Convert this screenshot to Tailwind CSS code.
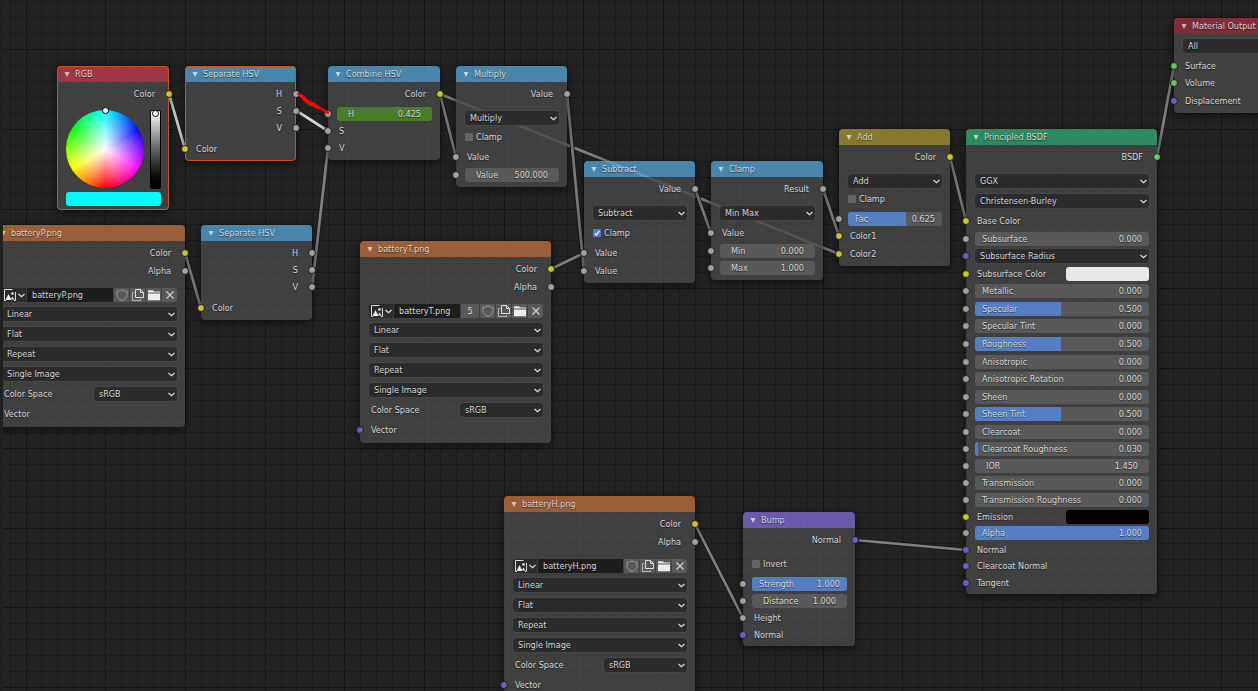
<!DOCTYPE html>
<html lang="en">
<head>
<meta charset="utf-8">
<title>Shader Editor</title>
<script src="https://cdn.jsdelivr.net/npm/@tailwindcss/browser@4"></script>
</head>
<body class="bg-[#232323]">
<main id="canvas" class="relative h-screen overflow-hidden bg-[#232323] text-[9px] leading-[14px] text-[#d8d8d8] font-['DejaVu_Sans_Condensed','DejaVu_Sans',sans-serif] [text-shadow:0_1px_1px_rgba(0,0,0,0.6)]">
  <svg id="wires" class="absolute inset-0 size-full" aria-hidden="true"></svg>
  <div id="nodes"></div>
  <svg class="pointer-events-none absolute inset-0 size-full" fill="none" stroke="#f00" stroke-width="2.2" stroke-linecap="round" stroke-linejoin="round" aria-hidden="true">
    <path d="M298 94L303 96L309 102L314 103.500L318 107L322 109L328 113M300 95L304 100L310 105L314 105L318 108M310 103L315 107"/>
  </svg>
  <div class="absolute inset-y-0 left-0 w-[3px] bg-[#202020]"></div>
</main>
<script>
const dots = {
  y: 'bg-[#c7c729]', g: 'bg-[#a1a1a1]', b: 'bg-[#6363c7]', s: 'bg-[#63c763]'
};
const heads = {
  red: 'bg-[#be3d4c]/80', out: 'bg-[#9b2d3b]/80', blue: 'bg-[#519fcf]/80', orange: 'bg-[#ba6d3b]/80',
  yellow: 'bg-[#a18e32]/80', green: 'bg-[#32a56e]/80', purple: 'bg-[#7d68cd]/80'
};
const heights = { 16: 'h-4', 17: 'h-[17px] pb-px', 18: 'h-[18px]', 20: 'h-5' };
const dotTops = { 16: 'top-1', 17: 'top-1', 18: 'top-[5px]', 20: 'top-1.5' };
const gaps = { 1: 'h-px', 2: 'h-0.5', 3: 'h-[3px]', 6: 'h-1.5', 7: 'h-[7px]' };
let uid = 0;

const dot = (c, side, h) => c ? `<i class="absolute ${dotTops[h]} ${side === 'r' ? '-right-1' : '-left-1'} size-2 rounded-full border border-[#1c1c1c] ${dots[c]}"></i>` : '';
const row = (h, inner, c, side = 'l') => `<div class="relative flex items-center pl-[9px] pr-2 ${heights[h]}">${dot(c, side, h)}${inner}</div>`;
const gap = n => `<div class="${gaps[n]}"></div>`;
const out = (text, c, h = 18) => row(h, `<span class="ml-auto pr-1.5">${text}</span>`, c, 'r');
const inp = (text, c, h = 18) => row(h, `<span class="pl-0.5 whitespace-nowrap">${text}</span>`, c);
const chevron = `<svg class="pointer-events-none absolute right-[2px] top-[5px] h-[5px] w-[7px]" viewBox="0 0 7 5" fill="none" stroke="#dedede" stroke-width="1.2"><path d="M.5 1L3.5 3.8L6.5 1"/></svg>`;
const select = (text, label) => `<span class="relative block h-[14px] min-w-0 flex-1"><select aria-label="${label || text}" class="block h-[14px] w-full appearance-none rounded-[3px] bg-[#2b2b2b] pl-[5px] pr-3 leading-[14px] outline outline-[#464646] [text-shadow:inherit]"><option>${text}</option></select>${chevron}</span>`;
const sel = (text, h = 18, c, label) => row(h, select(text, label), c);
const check = (text, on) => { const id = 'f' + uid++; return row(18, `<input id="${id}" type="checkbox" ${on ? 'checked' : ''} class="peer size-2 appearance-none rounded-[1px] bg-[#656565] checked:bg-[#4f7bc6]"><svg class="pointer-events-none absolute left-[9px] hidden size-2 peer-checked:block" viewBox="0 0 9 9" fill="none" stroke="#fff" stroke-width="1.4"><path d="M2 4.8L3.8 6.8L7.2 2.2"/></svg><label for="${id}" class="pl-[3px]">${text}</label>`); };
const field = (text, value, c, h, fill, style) => {
  const id = 'f' + uid++;
  return row(h, `<div class="relative flex h-[14px] w-full items-center overflow-hidden rounded-[3px] ${style === 'key' ? 'bg-[#477f29]' : 'bg-[#595959]'} ${style ? 'px-[11px]' : 'px-[7px]'}">
    ${fill ? `<i class="absolute inset-y-0 left-0 bg-[#557fc4]" style="width:${fill}%"></i>` : ''}
    <label for="${id}" class="relative whitespace-nowrap">${text}</label><input id="${id}" value="${value}" class="relative w-0 min-w-0 flex-1 bg-transparent text-right outline-none [text-shadow:inherit]"></div>`, c);
};
const swatch = (text, bg, c, h) => row(h, `<span class="w-1/2 grow pl-0.5 whitespace-nowrap">${text}</span><button aria-label="${text}" class="h-[14px] w-[83px] rounded-[3px] ${bg}"></button>`, c);

const icon = {
  image: `<svg class="size-3" viewBox="0 0 12 12" fill="none" stroke="#dcdcdc"><path d="M8.500 .5H.5V11.500H2M11.500 3V11.500H10"/><path d="M1.500 11L4.500 5L7.500 11ZM7 10L8.500 7.500L10.500 11Z" fill="#eee" stroke="none"/><circle cx="8.500" cy="4.500" r="1.300" fill="#eee" stroke="none"/></svg>`,
  chev: `<svg class="h-[5px] w-[7px]" viewBox="0 0 7 5" fill="none" stroke="#dedede" stroke-width="1.200"><path d="M.5 1L3.500 3.800L6.500 1"/></svg>`,
  shield: `<svg class="size-3" viewBox="0 0 12 12" fill="none" stroke="#9a9a9a"><path d="M6 .7C4.500 1.800 2.800 2.100 1 2.100V5.500C1 8.300 3 10.300 6 11.500C9 10.300 11 8.300 11 5.500V2.100C9.200 2.100 7.500 1.800 6 .7Z"/></svg>`,
  copy: `<svg class="size-3" viewBox="0 0 12 12" fill="none" stroke="#e0e0e0"><path d="M3.500 .5H8.500L11.500 3.500V8.500H3.500ZM8.500 .5V3.500H11.500"/><path d="M2 3.500H.5V11.500H8.500V10" stroke="#b5b5b5"/></svg>`,
  folder: `<svg class="size-3" viewBox="0 0 12 12" fill="#ececec"><path d="M0 1.200H5L6 2.500H12V3.600H0ZM0 4.500H12V11.200H0Z"/></svg>`,
  x: `<svg class="size-3" viewBox="0 0 12 12" fill="none" stroke="#d0d0d0" stroke-width="1.200"><path d="M2.500 2.500L9.500 9.500M9.500 2.500L2.500 9.500"/></svg>`
};
const ib = (name, label, round = '') => `<button aria-label="${label}" class="flex h-[14px] w-[15px] items-center justify-center bg-[#595959] ${round}">${icon[name]}</button>`;
const datablock = (name, users) => row(18, `<div class="flex w-full gap-px">
  <button aria-label="Browse image" class="flex h-[14px] w-6 items-center justify-end gap-0.5 rounded-l-[3px] bg-[#2b2b2b] pr-px">${icon.image}${icon.chev}</button>
  <input aria-label="Image name" value="${name}" class="h-[14px] w-0 min-w-0 flex-1 bg-[#1d1d1d] pl-[5px] outline-none [text-shadow:inherit]">
  ${users ? `<button aria-label="Users" class="h-[14px] w-[18px] bg-[#595959]">${users}</button>` : ''}
  ${ib('shield', 'Fake user')}${ib('copy', 'New image')}${ib('folder', 'Open image')}${ib('x', 'Unlink', 'rounded-r-[3px]')}</div>`);
const imageNode = (name, users) => out('Color', 'y') + out('Alpha', 'g') + gap(6) + datablock(name, users) +
  sel('Linear', 20) + sel('Flat', 20) + sel('Repeat', 20) + sel('Single Image', 20) +
  row(20, `<span class="w-0 flex-1 pl-0.5 whitespace-nowrap">Color Space</span><span class="flex w-[83px]">${select('sRGB', 'Color Space')}</span>`) + inp('Vector', 'b', 20);

const wheel = `<div class="flex justify-between pl-[9px] pr-2">
  <div class="relative size-[78px] rounded-full bg-[radial-gradient(circle_closest-side,#fff,transparent),conic-gradient(#0ff,#00f,#f0f,#f00,#ff0,#0f0,#0ff)]"><i class="absolute -top-[3px] left-9 size-[7px] rounded-full border border-black bg-white"></i></div>
  <div class="relative h-[79px] w-[11px] rounded-[2px] border border-black bg-linear-to-b from-white to-black"><i class="absolute -top-px left-px size-[7px] rounded-full border border-black bg-white"></i></div></div>
  ${gap(3)}<div class="flex pl-[9px] pr-2"><button aria-label="Color value" class="h-[14px] flex-1 rounded-[3px] bg-[#00fbff]"></button></div>${gap(1)}`;

const hsvOut = out('H', 'g') + out('S', 'g', 17) + out('V', 'g', 17) + gap(3) + inp('Color', 'y');
const nodes = [
  [57, 66, 112, 'red', 'RGB', out('Color', 'y') + gap(7) + wheel, true],
  [185, 66, 111, 'blue', 'Separate HSV', hsvOut, true],
  [328, 66, 112, 'blue', 'Combine HSV', out('Color', 'y') + gap(2) + field('H', '0.425', 'g', 18, 0, 'key') + inp('S', 'g', 17) + inp('V', 'g', 17)],
  [456, 66, 111, 'blue', 'Multiply', out('Value', 'g') + gap(6) + sel('Multiply') + gap(1) + check('Clamp') + gap(2) + inp('Value', 'g') + field('Value', '500.000', 'g', 18, 0, 'num')],
  [-7, 225, 192, 'orange', 'batteryP.png', imageNode('batteryP.png')],
  [201, 225, 111, 'blue', 'Separate HSV', hsvOut],
  [360, 241, 191, 'orange', 'batteryT.png', imageNode('batteryT.png', 5)],
  [584, 161, 111, 'blue', 'Subtract', out('Value', 'g') + gap(6) + sel('Subtract') + gap(2) + check('Clamp', true) + gap(2) + inp('Value', 'g') + inp('Value', 'g')],
  [711, 161, 112, 'blue', 'Clamp', out('Result', 'g') + gap(6) + sel('Min Max') + gap(2) + inp('Value', 'g') + field('Min', '0.000', 'g', 18, 0, 'num') + field('Max', '1.000', 'g', 17, 0, 'num')],
  [839, 129, 111, 'yellow', 'Add', out('Color', 'y') + gap(6) + sel('Add') + check('Clamp') + gap(2) + field('Fac', '0.625', 'g', 18, 61.5) + inp('Color1', 'y', 17) + inp('Color2', 'y')],
  [966, 129, 191, 'green', 'Principled BSDF', out('BSDF', 's') + gap(6) + sel('GGX') + gap(2) + sel('Christensen-Burley') + gap(2) +
    inp('Base Color', 'y') + field('Subsurface', '0.000', 'g', 18) + sel('Subsurface Radius', 17, 'b') + swatch('Subsurface Color', 'bg-[#e7e7e7]', 'y', 18) +
    field('Metallic', '0.000', 'g', 17) + field('Specular', '0.500', 'g', 18, 49.5) + field('Specular Tint', '0.000', 'g', 17) + field('Roughness', '0.500', 'g', 18, 49.5) +
    field('Anisotropic', '0.000', 'g', 18) + field('Anisotropic Rotation', '0.000', 'g', 17) + field('Sheen', '0.000', 'g', 18) + field('Sheen Tint', '0.500', 'g', 17, 49.5) +
    field('Clearcoat', '0.000', 'g', 18) + field('Clearcoat Roughness', '0.030', 'g', 17, 2) + field('IOR', '1.450', 'g', 17, 0, 'num') + field('Transmission', '0.000', 'g', 17) +
    field('Transmission Roughness', '0.000', 'g', 17) + swatch('Emission', 'bg-black', 'y', 16) + field('Alpha', '1.000', 'g', 17, 100) +
    inp('Normal', 'b', 16) + inp('Clearcoat Normal', 'b', 17) + inp('Tangent', 'b', 16)],
  [1174, 18, 112, 'out', 'Material Output', sel('All') + gap(2) + inp('Surface', 's') + inp('Volume', 's', 17) + inp('Displacement', 'b')],
  [504, 496, 191, 'orange', 'batteryH.png', imageNode('batteryH.png')],
  [743, 512, 112, 'purple', 'Bump', out('Normal', 'b') + gap(6) + check('Invert') + gap(2) + field('Strength', '1.000', 'g', 18, 100) + field('Distance', '1.000', 'g', 17, 0, 'num') + inp('Height', 'g', 17) + inp('Normal', 'b', 16)]
];
document.getElementById('nodes').innerHTML = nodes.map(([x, y, w, head, title, body, picked]) => `
<section class="absolute rounded-[4px] shadow-[0_2px_8px_2px_rgba(0,0,0,0.45)] ${picked ? 'outline -outline-offset-1 outline-[#cf5413]' : ''}" style="left:${x}px;top:${y}px;width:${w}px">
  <header class="flex h-4 items-center gap-[5px] rounded-t-[4px] pl-[7px] ${heads[head]}">
    <svg class="h-[5px] w-[6px] shrink-0" viewBox="0 0 6 5" fill="#fff" fill-opacity=".65" aria-hidden="true"><path d="M.5 0H5.500L3 5Z"/></svg><h2 class="whitespace-nowrap">${title}</h2>
  </header>
  <div class="rounded-b-[4px] bg-[#474747]/80 py-[3px]">${body}</div>
</section>`).join('');

let grid = '';
for (let i = -1; i < 160; i++) {
  const x = Math.round(25.5 + (i * 79.7) / 5), y = Math.round(49 + ((i - 4) * 79.75) / 5);
  grid += `<path d="M${x}.5 0V2000" stroke="${i % 5 ? '#1b1b1b' : '#141414'}"/><path d="M0 ${y}.5H3000" stroke="${(i - 4) % 5 ? '#1b1b1b' : '#141414'}"/>`;
}
const links = [
  [169, 94, 185, 149, 1], [297, 111, 328, 131, 1], [185, 253, 201, 308], [312, 288, 328, 148], [440, 94, 456, 157], [440, 94, 839, 254],
  [567, 94, 584, 271], [551, 269, 584, 253], [695, 189, 711, 233], [823, 189, 839, 236], [950, 157, 966, 221], [1157, 157, 1174, 66],
  [695, 524, 743, 618], [855, 540, 966, 550]
];
document.getElementById('wires').innerHTML = grid + links.map(([a, b, c, d, lit]) =>
  `<path d="M${a} ${b}L${c} ${d}" stroke="#181818" stroke-width="4.4"/><path d="M${a} ${b}L${c} ${d}" stroke="${lit ? '#d4d4d4' : '#808080'}" stroke-width="2.7"/>`).join('');
</script>
</body>
</html>
